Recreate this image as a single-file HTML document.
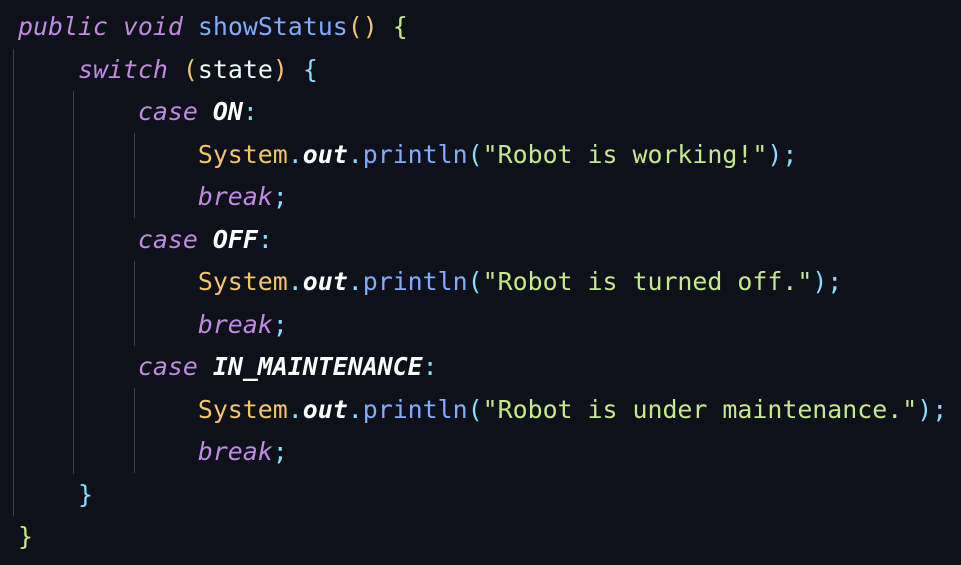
<!DOCTYPE html>
<html><head><meta charset="utf-8"><style>
html,body{margin:0;padding:0;background:#0f111a;width:961px;height:565px;overflow:hidden}
.c{position:absolute;left:18px;top:6px;font-family:"DejaVu Sans Mono","Liberation Mono",monospace;font-size:24.9px;line-height:42.5px;color:#eeffff;white-space:pre}
.k{color:#c08ae0;font-style:italic}
.f{color:#82aaff}
.y{color:#f5c46a}
.g{color:#c3e88d}
.p{color:#89ddff}
.b{font-weight:bold;font-style:italic;color:#fff}
.s{color:#c3e88d}
.gl{position:absolute;width:1px;background:#3a3f4f}
</style></head><body>
<div class="gl" style="left:13px;top:49px;height:467px"></div>
<div class="gl" style="left:73px;top:91px;height:383px"></div>
<div class="gl" style="left:134px;top:133px;height:85px"></div>
<div class="gl" style="left:134px;top:261px;height:85px"></div>
<div class="gl" style="left:134px;top:388px;height:85px"></div>
<div class="c"><span class="k">public</span> <span class="k">void</span> <span class="f">showStatus</span><span class="y">()</span> <span class="g">{</span>
    <span class="k">switch</span> <span class="y">(</span>state<span class="y">)</span> <span class="p">{</span>
        <span class="k">case</span> <span class="b">ON</span><span class="p">:</span>
            <span class="y">System</span><span class="p">.</span><span class="b">out</span><span class="p">.</span><span class="f">println</span><span class="p">(</span><span class="s">"Robot is working!"</span><span class="p">);</span>
            <span class="k">break</span><span class="p">;</span>
        <span class="k">case</span> <span class="b">OFF</span><span class="p">:</span>
            <span class="y">System</span><span class="p">.</span><span class="b">out</span><span class="p">.</span><span class="f">println</span><span class="p">(</span><span class="s">"Robot is turned off."</span><span class="p">);</span>
            <span class="k">break</span><span class="p">;</span>
        <span class="k">case</span> <span class="b">IN_MAINTENANCE</span><span class="p">:</span>
            <span class="y">System</span><span class="p">.</span><span class="b">out</span><span class="p">.</span><span class="f">println</span><span class="p">(</span><span class="s">"Robot is under maintenance."</span><span class="p">);</span>
            <span class="k">break</span><span class="p">;</span>
    <span class="p">}</span>
<span class="g">}</span></div>
</body></html>
